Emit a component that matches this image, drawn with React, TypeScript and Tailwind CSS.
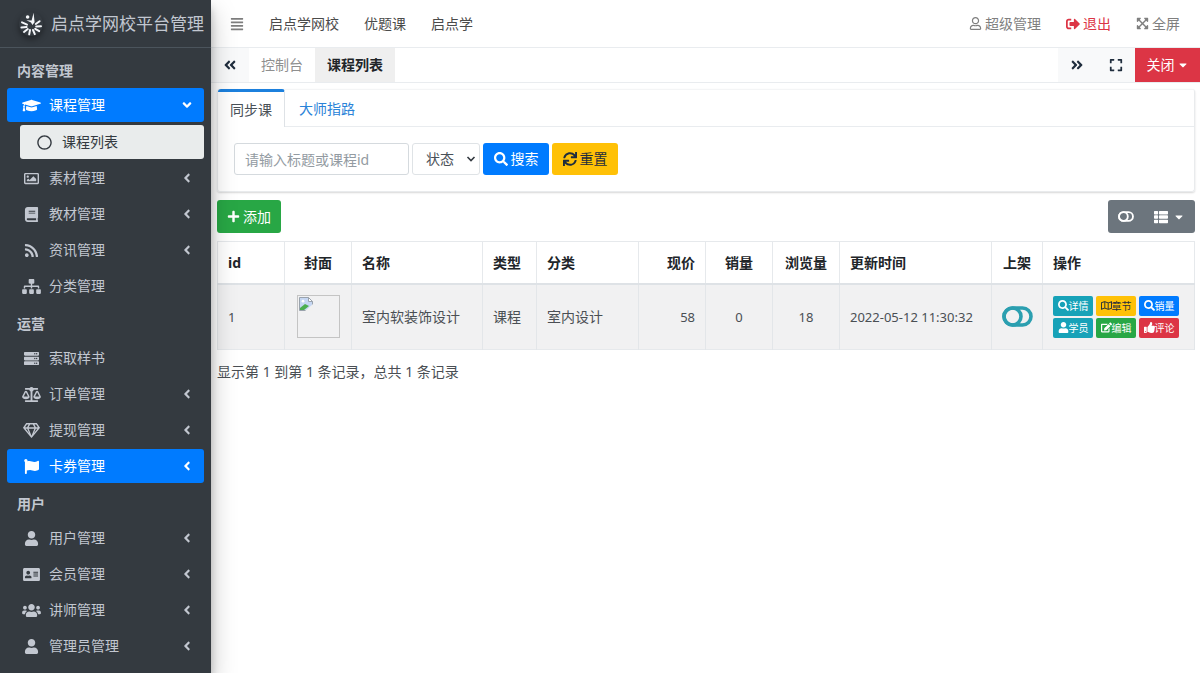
import type { ReactNode } from "react";
import type { IconType } from "react-icons";
import {
  FaAddressCard,
  FaAngleDoubleLeft,
  FaAngleDoubleRight,
  FaAngleDown,
  FaAngleLeft,
  FaAlignJustify,
  FaBalanceScale,
  FaBook,
  FaCaretDown,
  FaEdit,
  FaExpand,
  FaExpandArrowsAlt,
  FaFlag,
  FaGraduationCap,
  FaPlus,
  FaRegCircle,
  FaRegGem,
  FaRegImage,
  FaRegMap,
  FaRegUser,
  FaRss,
  FaSearch,
  FaServer,
  FaSignOutAlt,
  FaSitemap,
  FaSync,
  FaThList,
  FaThumbsUp,
  FaUser,
  FaUsers,
} from "react-icons/fa";

type MenuItem = {
  label: string;
  icon: IconType;
  arrow?: boolean;
  active?: boolean;
  children?: string[];
};

const menu: { title: string; items: MenuItem[] }[] = [
  {
    title: "内容管理",
    items: [
      { label: "课程管理", icon: FaGraduationCap, arrow: true, active: true, children: ["课程列表"] },
      { label: "素材管理", icon: FaRegImage, arrow: true },
      { label: "教材管理", icon: FaBook, arrow: true },
      { label: "资讯管理", icon: FaRss, arrow: true },
      { label: "分类管理", icon: FaSitemap },
    ],
  },
  {
    title: "运营",
    items: [
      { label: "索取样书", icon: FaServer },
      { label: "订单管理", icon: FaBalanceScale, arrow: true },
      { label: "提现管理", icon: FaRegGem, arrow: true },
      { label: "卡券管理", icon: FaFlag, arrow: true, active: true },
    ],
  },
  {
    title: "用户",
    items: [
      { label: "用户管理", icon: FaUser, arrow: true },
      { label: "会员管理", icon: FaAddressCard, arrow: true },
      { label: "讲师管理", icon: FaUsers, arrow: true },
      { label: "管理员管理", icon: FaUser, arrow: true },
    ],
  },
];

const actions: { label: string; icon: IconType; color: string }[] = [
  { label: "详情", icon: FaSearch, color: "bg-[#17a2b8] text-white" },
  { label: "章节", icon: FaRegMap, color: "bg-[#ffc107] text-[#1f2d3d]" },
  { label: "销量", icon: FaSearch, color: "bg-[#007bff] text-white" },
  { label: "学员", icon: FaUser, color: "bg-[#17a2b8] text-white" },
  { label: "编辑", icon: FaEdit, color: "bg-[#28a745] text-white" },
  { label: "评论", icon: FaThumbsUp, color: "bg-[#dc3545] text-white" },
];

// Logo
function Logo() {
  return (
    <svg
      viewBox="0 0 24 24"
      className="size-6 shrink-0 rounded-full shadow-[0_3px_6px_rgba(0,0,0,0.4)]"
      fill="none"
      stroke="#f4f6f9"
      strokeWidth="2"
      strokeLinecap="round"
      aria-hidden="true"
    >
      <circle cx="8.6" cy="5" r="1.8" fill="#f4f6f9" stroke="none" />
      <path d="M14.6.8 15.6 10.2 13.4 13 12 10.4 7.4 8.2 12.6 8.4Z" fill="#f4f6f9" stroke="none" />
      <path d="M3 10.4 8 12.6" />
      <path d="M2.4 15.4 7.6 15" />
      <path d="M5 20 8.8 17" />
      <path d="M10.2 22.4 11 18" />
      <path d="M15.8 22.2 14 18" />
      <path d="M20.2 19.2 16.2 16.8" />
      <path d="M22 14.2 17.2 14.4" />
      <path d="M20.6 9.2 16.8 12" />
    </svg>
  );
}

// Interruptor apagado: anillo a la izquierda dentro de la cápsula
function ToggleOff({ className }: { className: string }) {
  return (
    <svg viewBox="0 0 31 21" className={className} fill="none" stroke="currentColor" strokeWidth="3.6" aria-hidden="true">
      <rect x="2" y="2" width="27" height="17" rx="8.5" />
      <circle cx="10.5" cy="10.5" r="8.5" />
    </svg>
  );
}

function Sidebar() {
  return (
    <aside className="z-10 flex w-[211px] shrink-0 flex-col bg-[#343a40] text-[#c2c7d0] shadow-[0_12px_24px_rgba(0,0,0,0.25),0_8px_8px_rgba(0,0,0,0.2)]">
      <a href="#" className="flex h-12 items-center gap-2 border-b border-[#4b545c] pl-[19px] text-[17px] whitespace-nowrap">
        <Logo />
        启点学网校平台管理
      </a>
      <nav className="px-[7px] pt-1">
        {menu.map((group) => (
          <section key={group.title}>
            <h2 className="flex h-9 items-center pt-[2px] pl-[10px] text-[14px] font-bold">{group.title}</h2>
            <ul>
              {group.items.map((item) => {
                const Arrow = item.children ? FaAngleDown : FaAngleLeft;
                return (
                  <li key={item.label} className="pb-[2px]">
                    <a
                      href="#"
                      className={
                        item.active
                          ? "flex h-[34px] items-center rounded-[3px] bg-[#007bff] pr-[10px] pl-[14px] text-white"
                          : "flex h-[34px] items-center pr-[10px] pl-[14px]"
                      }
                    >
                      <span className="mr-2 flex w-5 justify-center">
                        <item.icon className="h-[15px] w-[19px]" />
                      </span>
                      <span className="flex-1">{item.label}</span>
                      {item.arrow && <Arrow className="size-[14px]" />}
                    </a>
                    {item.children?.map((child) => (
                      <a
                        key={child}
                        href="#"
                        className="mt-[3px] ml-[13px] flex h-[34px] items-center rounded-[3px] bg-[#e9ecec] pl-[17px] text-[#343a40]"
                      >
                        <FaRegCircle className="mr-[10px] size-[15px]" />
                        {child}
                      </a>
                    ))}
                  </li>
                );
              })}
            </ul>
          </section>
        ))}
      </nav>
    </aside>
  );
}

function TopBar() {
  return (
    <header className="flex h-12 items-center justify-between border-b border-[#e9ecef] pr-5 pl-[19px]">
      <nav className="flex items-center gap-[25px] text-[#4b4b4b]">
        <button type="button" aria-label="菜单" className="text-[#7d7d7d]">
          <FaAlignJustify className="size-[14px]" />
        </button>
        <a href="#">启点学网校</a>
        <a href="#">优题课</a>
        <a href="#">启点学</a>
      </nav>
      <nav className="flex items-center gap-[25px] text-[#7f7f7f]">
        <a href="#" className="flex items-center gap-[3px]">
          <FaRegUser className="size-[13px]" />
          超级管理
        </a>
        <a href="#" className="flex items-center gap-[3px] text-[#dc3545]">
          <FaSignOutAlt className="size-[14px]" />
          退出
        </a>
        <a href="#" className="flex items-center gap-[3px]">
          <FaExpandArrowsAlt className="size-[13px]" />
          全屏
        </a>
      </nav>
    </header>
  );
}

function TabBar() {
  return (
    <div className="flex h-[35px] items-stretch border-b border-[#e9ecef]">
      <button type="button" aria-label="向左" className="flex w-[38px] items-center justify-center bg-[#f8f9fa] text-[#1f2d3d]">
        <FaAngleDoubleLeft className="size-[14px]" />
      </button>
      <a href="#" className="flex items-center px-3 text-[#8f8f8f]">
        控制台
      </a>
      <a href="#" className="flex items-center bg-[#efefef] px-3 font-bold text-[#212529]">
        课程列表
      </a>
      <div className="ml-auto flex">
        <button type="button" aria-label="向右" className="flex w-[38px] items-center justify-center bg-[#f8f9fa] text-[#1f2d3d]">
          <FaAngleDoubleRight className="size-[14px]" />
        </button>
        <button type="button" aria-label="展开" className="flex w-[39px] items-center justify-center bg-[#f8f9fa] text-[#1f2d3d]">
          <FaExpand className="size-[14px]" />
        </button>
        <button type="button" className="flex w-[65px] items-center justify-center gap-[2px] bg-[#dc3545] text-white">
          关闭
          <FaCaretDown className="size-3" />
        </button>
      </div>
    </div>
  );
}

function SearchCard() {
  return (
    <section className="rounded-[3px] border-x border-b border-[#e9ebed] shadow-[0_1px_2px_rgba(0,0,0,0.16)]">
      <div className="flex h-[38px]">
        <a
          href="#"
          className="flex items-center rounded-t-[3px] border-t-[3px] border-r border-t-[#1c80dd] border-r-[#dee2e6] px-3 text-[#495057]"
        >
          同步课
        </a>
        <a href="#" className="flex flex-1 items-center border-t border-b border-t-[#f4f5f6] border-b-[#e9ecef] px-[14px] pt-[2px] text-[#2a83d8]">
          大师指路
        </a>
      </div>
      <form className="flex gap-[3px] px-4 pt-4 pb-4" onSubmit={(e) => e.preventDefault()}>
        <input
          type="text"
          aria-label="标题或课程id"
          placeholder="请输入标题或课程id"
          className="h-8 w-[175px] rounded-[3px] border border-[#d5dade] px-[10px] placeholder:text-[#939ba2]"
        />
        <div className="relative">
          <select aria-label="状态" className="h-8 w-[68px] appearance-none rounded-[3px] border border-[#dfe3e6] bg-white pl-[13px] text-[#495057]">
            <option>状态</option>
          </select>
          <svg viewBox="0 0 10 10" className="pointer-events-none absolute top-[11px] right-1 size-[10px]" fill="none" stroke="#343a40" strokeWidth="1.6">
            <path d="M1.5 3 5 6.5 8.5 3" />
          </svg>
        </div>
        <button type="submit" className="flex h-8 w-[66px] items-center justify-center gap-[3px] rounded-[3px] bg-[#007bff] text-white">
          <FaSearch className="size-[14px]" />
          搜索
        </button>
        <button type="reset" className="flex h-8 w-[66px] items-center justify-center gap-[3px] rounded-[3px] bg-[#ffc107] text-[#1f2d3d]">
          <FaSync className="size-[14px]" />
          重置
        </button>
      </form>
    </section>
  );
}

// Imagen rota en la columna de portada
function BrokenCover() {
  return (
    <div role="img" aria-label="封面" className="mx-auto size-[43px] border border-[#c4c4c4] p-px">
      <svg viewBox="0 0 14 14" className="size-[14px]" aria-hidden="true">
        <path d="M.5.5h9l4 4v9H.5z" fill="#c6d7f3" stroke="#9aa3ad" />
        <path d="M9.5.5v4h4z" fill="#fff" stroke="#9aa3ad" />
        <circle cx="4" cy="4.2" r="1.4" fill="#fff" />
        <path d="M1 13V11l5-4 4 2-5 4z" fill="#4caf50" />
        <path d="M6 14l8-7v7z" fill="#f1f1f1" />
      </svg>
    </div>
  );
}

type Column = { title: string; cell: ReactNode; width: string; align?: string };

const columns: Column[] = [
  { title: "id", cell: <span className="text-[13px]">1</span>, width: "w-[67px]" },
  { title: "封面", cell: <BrokenCover />, width: "w-[67px]", align: "text-center" },
  { title: "名称", cell: "室内软装饰设计", width: "w-[131px]" },
  { title: "类型", cell: "课程", width: "w-[54px]" },
  { title: "分类", cell: "室内设计", width: "w-[102px]" },
  { title: "现价", cell: <span className="text-[13px]">58</span>, width: "w-[67px]", align: "text-right" },
  { title: "销量", cell: <span className="text-[13px]">0</span>, width: "w-[67px]", align: "text-center" },
  { title: "浏览量", cell: <span className="text-[13px]">18</span>, width: "w-[67px]", align: "text-center" },
  { title: "更新时间", cell: <span className="text-[13px]">2022-05-12 11:30:32</span>, width: "w-[152px]" },
  {
    title: "上架",
    cell: (
      <button type="button" aria-label="上架" className="block text-[#2b9fb0]">
        <ToggleOff className="h-[21px] w-[31px]" />
      </button>
    ),
    width: "w-[51px]",
    align: "text-center",
  },
  {
    title: "操作",
    cell: (
      <div className="grid grid-cols-[repeat(3,40px)] gap-x-[3px] gap-y-[2px]">
        {actions.map(({ label, icon: Icon, color }) => (
          <button key={label} type="button" className={`flex h-5 items-center justify-center rounded-[2px] text-[10px] ${color}`}>
            <Icon className="size-[11px]" />
            {label}
          </button>
        ))}
      </div>
    ),
    width: "",
  },
];

function CourseTable() {
  return (
    <table className="w-full table-fixed border-collapse border border-[#e6e9ec] text-[#4a4f54]">
      <thead>
        <tr className="h-[42px] border-b-2 border-[#dee2e6] text-[#212529]">
          {columns.map((c) => (
            <th
              key={c.title}
              scope="col"
              className={`border-x border-[#e6e9ec] pt-[2px] whitespace-nowrap font-bold ${c.title === "上架" ? "px-0" : "px-[10px]"} ${c.width} ${c.align ?? "text-left"}`}
            >
              {c.title}
            </th>
          ))}
        </tr>
      </thead>
      <tbody>
        <tr className="h-[66px] bg-[#f1f1f2]">
          {columns.map((c) => (
            <td key={c.title} className={`border-x border-[#e3e6e9] px-[10px] whitespace-nowrap ${c.align ?? "text-left"}`}>
              {c.cell}
            </td>
          ))}
        </tr>
      </tbody>
    </table>
  );
}

export default function App() {
  return (
    <div className="flex min-h-screen bg-white font-['Noto_Sans','Noto_Sans_CJK_SC',sans-serif] text-[14px] leading-5">
      <Sidebar />
      <div className="min-w-0 flex-1">
        <TopBar />
        <TabBar />
        <main className="pt-[6px] pr-[5px] pl-[6px]">
          <SearchCard />
          <div className="flex items-center justify-between py-2">
            <button type="button" className="flex h-[33px] items-center gap-[3px] rounded-[3px] bg-[#28a745] px-[10px] text-white">
              <FaPlus className="size-[13px]" />
              添加
            </button>
            <div className="flex h-[33px] overflow-hidden rounded-[3px] bg-[#6c757d] text-white">
              <button type="button" aria-label="切换视图" className="px-[10px]">
                <ToggleOff className="h-[11px] w-4" />
              </button>
              <button type="button" aria-label="列" className="flex items-center gap-[5px] px-[10px]">
                <FaThList className="size-[14px]" />
                <FaCaretDown className="size-3" />
              </button>
            </div>
          </div>
          <CourseTable />
          <p className="pt-3 text-[#4a4f54]">显示第 1 到第 1 条记录，总共 1 条记录</p>
        </main>
      </div>
    </div>
  );
}
